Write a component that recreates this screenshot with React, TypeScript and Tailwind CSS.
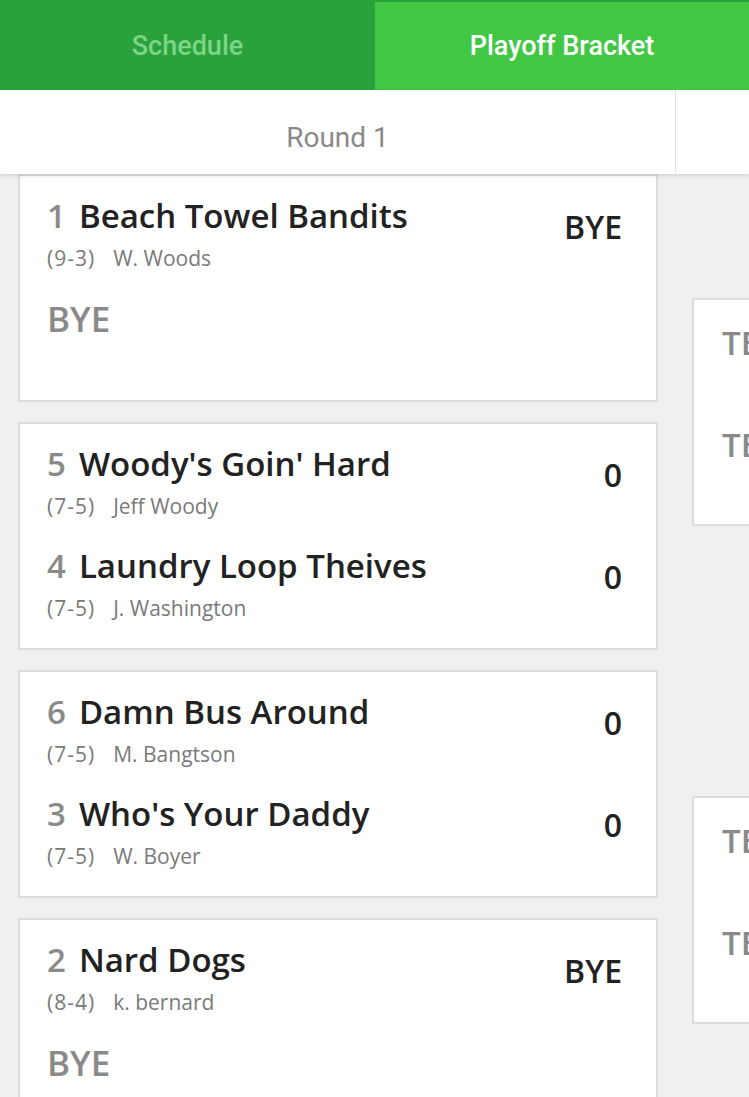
import React from 'react';

type Team = { seed: number; name: string; record: string; owner: string; score: string };
type Matchup = { top: Team; bottom?: Team };

const round1: Matchup[] = [
  { top: { seed: 1, name: 'Beach Towel Bandits', record: '(9-3)', owner: 'W. Woods', score: 'BYE' } },
  {
    top: { seed: 5, name: "Woody's Goin' Hard", record: '(7-5)', owner: 'Jeff Woody', score: '0' },
    bottom: { seed: 4, name: 'Laundry Loop Theives', record: '(7-5)', owner: 'J. Washington', score: '0' },
  },
  {
    top: { seed: 6, name: 'Damn Bus Around', record: '(7-5)', owner: 'M. Bangtson', score: '0' },
    bottom: { seed: 3, name: "Who's Your Daddy", record: '(7-5)', owner: 'W. Boyer', score: '0' },
  },
  { top: { seed: 2, name: 'Nard Dogs', record: '(8-4)', owner: 'k. bernard', score: 'BYE' } },
];

function TeamRow({ team }: { team: Team }) {
  return (
    <div className="flex items-start justify-between h-[102px]">
      <div>
        <div className="flex items-baseline text-[33px] leading-[40px] font-semibold mt-[-3px]">
          <span className="text-[#8a8a8a] mr-[13px]">{team.seed}</span>
          <span className="text-[#222]">{team.name}</span>
        </div>
        <div className="text-[21px] leading-[24px] text-[#7a7a7a] mt-[10px]">
          <span className="tracking-[1px]">{team.record}</span>
          <span className="ml-[18px]">{team.owner}</span>
        </div>
      </div>
      <div className="text-[32px] leading-[40px] font-semibold text-[#222] mt-[8px]">{team.score}</div>
    </div>
  );
}

function MatchCard({ m }: { m: Matchup }) {
  return (
    <div className="bg-white border-2 border-[#dcdcdc] h-[228px] pl-[27px] pr-[34px] pt-[23px] mb-[20px]">
      <TeamRow team={m.top} />
      {m.bottom ? (
        <TeamRow team={m.bottom} />
      ) : (
        <div className="text-[35px] leading-[40px] font-semibold text-[#8a8a8a] mt-[-2px]">BYE</div>
      )}
    </div>
  );
}

function TbdCard() {
  return (
    <div className="bg-white border-2 border-[#dcdcdc] h-[228px] pl-[28px] pt-[23px] w-[200px]">
      <div className="text-[33px] leading-[40px] font-semibold text-[#8a8a8a] h-[102px]">TBD</div>
      <div className="text-[33px] leading-[40px] font-semibold text-[#8a8a8a]">TBD</div>
    </div>
  );
}

export default function App() {
  return (
    <div className="w-[749px] h-[1097px] overflow-hidden bg-[#eff0f2]" style={{ fontFamily: '"Open Sans", "Noto Sans", sans-serif' }}>
      {/* Tabs */}
      <div className="flex h-[90px] bg-[#2aa23c] pt-[2px]" style={{ fontFamily: 'Roboto, "Noto Sans", sans-serif' }}>
        <div className="w-[375px] flex items-center justify-center text-[27px] font-medium text-[#7cd487]">
          Schedule
        </div>
        <div className="flex-1 flex items-center justify-center bg-[#42c744] text-[27px] font-medium text-white">
          Playoff Bracket
        </div>
      </div>

      <div className="flex">
        {/* Round 1 column */}
        <div className="w-[676px] shrink-0">
          <div
            className="relative z-10 h-[84px] bg-white border-r border-[#e3e3e3] flex items-center justify-center pt-[12px] text-[28px] text-[#8a8a8a] shadow-[0_2px_4px_rgba(0,0,0,0.12)]"
            style={{ fontFamily: 'Roboto, "Noto Sans", sans-serif' }}
          >
            Round 1
          </div>
          <div className="px-[18px]">
            {round1.map((m, i) => (
              <MatchCard key={i} m={m} />
            ))}
          </div>
        </div>

        {/* Round 2 column */}
        <div className="flex-1 overflow-hidden">
          <div className="relative z-10 h-[84px] bg-white shadow-[0_2px_4px_rgba(0,0,0,0.12)]" />
          <div className="pl-[16px] pt-[124px] flex flex-col gap-[270px]">
            <TbdCard />
            <TbdCard />
          </div>
        </div>
      </div>
    </div>
  );
}
